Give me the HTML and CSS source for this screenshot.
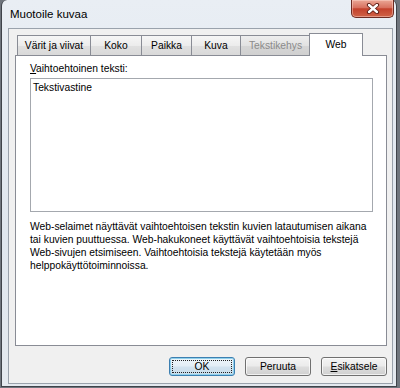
FILE: index.html
```html
<!DOCTYPE html>
<html lang="fi">
<head>
<meta charset="utf-8">
<title>Muotoile kuvaa</title>
<link rel="stylesheet" href="styles.css">
</head>
<body>
<div class="window">
  <div class="titlebar">
    <span class="title">Muotoile kuvaa</span>
    <div class="close" aria-label="Sulje">
      <svg width="14" height="11" viewBox="0 0 14 11">
        <path d="M3 2 L11 9 M11 2 L3 9" stroke="#5a1a12" stroke-width="4.2" stroke-linecap="round"/>
        <path d="M3 2 L11 9 M11 2 L3 9" stroke="#ffffff" stroke-width="2.4" stroke-linecap="round"/>
      </svg>
    </div>
  </div>
  <div class="client">
    <div class="tabs">
      <div class="tab">Värit ja viivat</div>
      <div class="tab">Koko</div>
      <div class="tab">Paikka</div>
      <div class="tab">Kuva</div>
      <div class="tab disabled">Tekstikehys</div>
      <div class="tab active">Web</div>
    </div>
    <div class="panel">
      <div class="lbl"><u>V</u>aihtoehtoinen teksti:</div>
      <div class="textbox">Tekstivastine</div>
      <p class="desc">Web-selaimet näyttävät vaihtoehtoisen tekstin kuvien latautumisen aikana<br>tai kuvien puuttuessa. Web-hakukoneet käyttävät vaihtoehtoisia tekstejä<br>Web-sivujen etsimiseen. Vaihtoehtoisia tekstejä käytetään myös<br>helppokäyttötoiminnoissa.</p>
    </div>
    <div class="buttons">
      <div class="btn default"><span class="focus">OK</span></div>
      <div class="btn">Peruuta</div>
      <div class="btn"><u>E</u>sikatsele</div>
    </div>
  </div>
</div>
</body>
</html>
```
FILE: styles.css
```css
* { box-sizing: border-box; }
html, body { margin: 0; padding: 0; }
body {
  background: #6f757d;
  font-family: "Liberation Sans", Arial, sans-serif;
  font-size: 10.3px;
  color: #000;
  width: 400px;
  height: 388px;
  overflow: hidden;
}
.window {
  margin-left: 1px;
  width: 396px;
  height: 387px;
  background: linear-gradient(#e9eef4, #dfe6ee 60%, #e4e9ef);
  border: 1px solid #3f434a;
  border-top: none;
  border-radius: 6px 6px 0 0;
  padding: 0 3px 2px 6px;
  display: flex;
  flex-direction: column;
}
.titlebar {
  height: 28px;
  display: flex;
  justify-content: space-between;
  align-items: flex-start;
}
.title {
  font-size: 11.5px;
  padding: 8px 0 0 2px;
  line-height: 13px;
}
.close {
  width: 43px;
  height: 18px;
  margin-right: -1px;
  border: 1px solid #6d2b22;
  border-top: none;
  border-radius: 0 0 5px 5px;
  background: linear-gradient(#eba796 0%, #d8715f 45%, #c3412c 52%, #cf6246 100%);
  box-shadow: inset 0 0 0 1px rgba(255, 220, 210, 0.45);
  display: flex;
  align-items: center;
  justify-content: center;
}
.close svg { display: block; margin-top: -1px; }
.client {
  height: 356px;
  border: 1px solid #9aa2ac;
  background: #f0f0f0;
  padding: 4px 5px 7px 6px;
  display: flex;
  flex-direction: column;
}
.tabs {
  height: 22px;
  display: flex;
  align-items: flex-end;
  padding-left: 2px;
}
.tab {
  height: 20px;
  border: 1px solid #898c95;
  border-bottom: none;
  background: linear-gradient(#f6f6f6, #ececec 50%, #e0e0e0 52%, #d9d9d9);
  text-align: center;
  line-height: 19px;
  white-space: nowrap;
}
.tab + .tab { margin-left: -1px; }
.tab:nth-child(1) { width: 74px; }
.tab:nth-child(2) { width: 52px; }
.tab:nth-child(3) { width: 51px; }
.tab:nth-child(4) { width: 50px; }
.tab:nth-child(5) { width: 71px; }
.tab.disabled { color: #8b8b8b; background: linear-gradient(#eeeeee, #e2e2e2 50%, #d6d6d6 52%, #d0d0d0); }
.tab.active {
  width: 54px;
  height: 23px;
  margin-left: -2px;
  margin-bottom: -1px;
  background: #fff;
  position: relative;
  z-index: 1;
  line-height: 22px;
}
.panel {
  height: 291px;
  width: 372px;
  border: 1px solid #898c95;
  background: #fff;
  padding: 6px 0 0 14px;
}
.lbl { line-height: 13px; }
.textbox {
  margin-top: 3px;
  width: 343px;
  height: 134px;
  border: 1px solid #a4a8ae;
  background: #fff;
  padding: 2px 2px;
  line-height: 13px;
}
.desc {
  margin: 8px 0 0 0;
  line-height: 13px;
  white-space: nowrap;
}
.buttons {
  margin-top: 11px;
  width: 372px;
  display: flex;
  justify-content: flex-end;
  gap: 10px;
}
.btn {
  width: 66px;
  height: 19px;
  border: 1px solid #707070;
  border-radius: 3px;
  background: linear-gradient(#f4f4f4, #ebebeb 48%, #dddddd 52%, #d0d0d0);
  box-shadow: inset 0 0 0 1px rgba(255, 255, 255, 0.7);
  text-align: center;
  line-height: 17px;
}
.btn.default {
  border-color: #3c7fb1;
  background: linear-gradient(#eef5fa, #e3eef6 48%, #d3e3ef 52%, #c8dcea);
  box-shadow: inset 0 0 0 1px #8fd0ec;
  padding: 2px;
}
.focus {
  display: block;
  height: 13px;
  border: 1px dotted #222;
  line-height: 11px;
}
```
